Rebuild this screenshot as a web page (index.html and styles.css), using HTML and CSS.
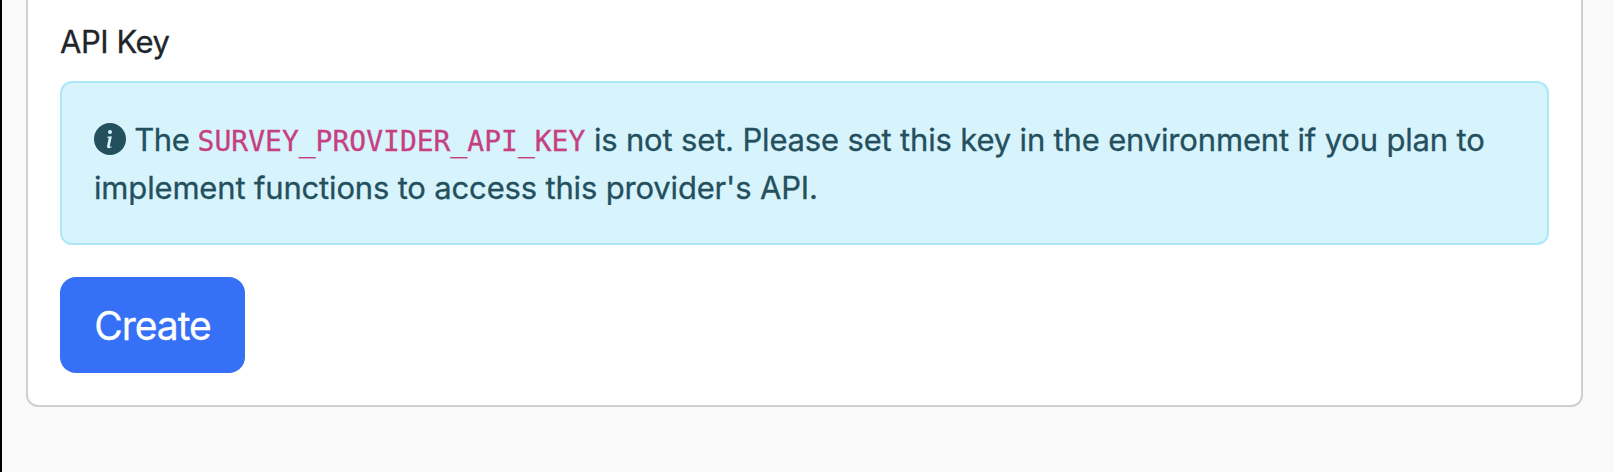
FILE: index.html
```
<!DOCTYPE html>
<html lang="en">
<head>
<meta charset="utf-8">
<title>API Key</title>
<link rel="stylesheet" href="styles.css">
</head>
<body>
<main class="page">
  <form class="card">
    <div class="label">API Key</div>
    <div class="alert"><svg class="icon" viewBox="0 0 16 16" fill="currentColor" aria-hidden="true"><path d="M8 16A8 8 0 1 0 8 0a8 8 0 0 0 0 16m.93-9.412-1 4.705c-.07.34.029.533.304.533.194 0 .487-.07.686-.246l-.088.416c-.287.346-.92.598-1.465.598-.703 0-1.002-.422-.808-1.319l.738-3.468c.064-.293.006-.399-.287-.47l-.451-.081.082-.381 2.29-.287zM8 5.5a1 1 0 1 1 0-2 1 1 0 0 1 0 2"/></svg> The <code class="code">SURVEY_PROVIDER_API_KEY</code><span class="message"> is not set. Please set this key in the environment if you plan to<br>implement functions to access this provider's API.</span></div>
    <button class="button" type="button">Create</button>
  </form>
</main>
</body>
</html>
```
FILE: styles.css
```
* {
  box-sizing: border-box;
}

body {
  margin: 0;
  background: #f9f9f9;
  color: #212529;
  font-family: Inter, "Liberation Sans", sans-serif;
  font-size: 31px;
  line-height: 48px;
  letter-spacing: -0.45px;
  -webkit-text-stroke: 0.3px currentColor;
}

.page {
  height: 472px;
  padding: 0 31px 65px 24px;
  border-left: 2px solid #000;
}

.card {
  height: 407px;
  padding: 18px 32px 32px;
  background: #fff;
  border: 2px solid #d0d0d0;
  border-top: 0;
  border-radius: 0 0 12px 12px;
}

.label {
  margin-bottom: 15px;
}

.alert {
  height: 164px;
  margin-bottom: 32px;
  padding: 33px 32px 31px;
  background: #d7f3fc;
  border: 2px solid #ade8f7;
  border-radius: 12px;
  color: #24505e;
  white-space: nowrap;
}

.icon {
  width: 32px;
  height: 32px;
  vertical-align: -4px;
}

.code {
  color: #c63f80;
  font-family: "DejaVu Sans Mono", monospace;
  font-size: 28px;
  line-height: 1;
  letter-spacing: 0;
}

.message {
  letter-spacing: -0.17px;
}

.button {
  display: block;
  width: 185px;
  height: 96px;
  padding: 2px 0 0;
  background: #3570f6;
  border: 0;
  border-radius: 16px;
  color: #fff;
  font: inherit;
  font-size: 39px;
  letter-spacing: -1px;
}
```
